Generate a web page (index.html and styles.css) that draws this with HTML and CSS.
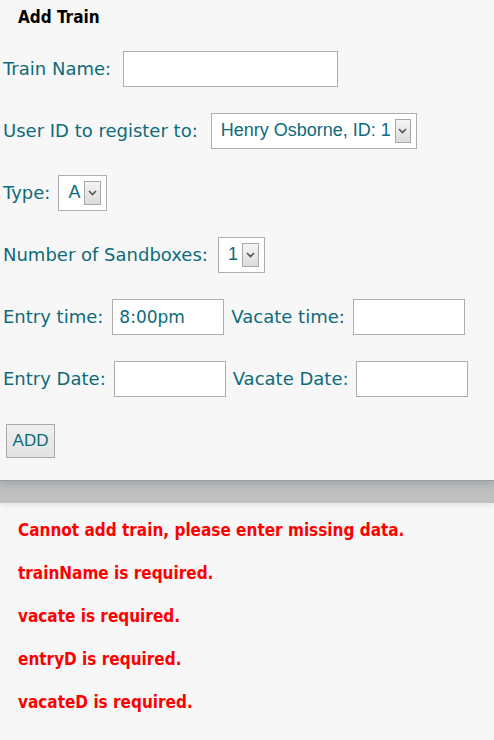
FILE: index.html
```html
<!DOCTYPE html>
<html>
<head>
<meta charset="utf-8">
<title>Add Train</title>
<link rel="stylesheet" href="styles.css">
</head>
<body>
<div class="panel">
  <h2 class="title">Add Train</h2>
  <form class="form">
    <div class="row">
      <label class="lbl lbl-name">Train Name:</label>
      <span class="input w-name"></span>
    </div>
    <div class="row">
      <label class="lbl lbl-user">User ID to register to:</label>
      <span class="select s-user"><span class="val">Henry Osborne, ID: 1</span><span class="arrow"><svg width="9" height="6" viewBox="0 0 9 6"><path d="M1 1 L4.5 4.5 L8 1" fill="none" stroke="#555" stroke-width="1.6"/></svg></span></span>
    </div>
    <div class="row">
      <label class="lbl">Type:</label>
      <span class="select s-type"><span class="val">A</span><span class="arrow"><svg width="9" height="6" viewBox="0 0 9 6"><path d="M1 1 L4.5 4.5 L8 1" fill="none" stroke="#555" stroke-width="1.6"/></svg></span></span>
    </div>
    <div class="row">
      <label class="lbl lbl-num">Number of Sandboxes:</label>
      <span class="select s-num"><span class="val">1</span><span class="arrow"><svg width="9" height="6" viewBox="0 0 9 6"><path d="M1 1 L4.5 4.5 L8 1" fill="none" stroke="#555" stroke-width="1.6"/></svg></span></span>
    </div>
    <div class="row">
      <label class="lbl lbl-entry">Entry time:</label>
      <span class="input w-small"><span class="text">8:00pm</span></span>
      <label class="lbl">Vacate time:</label>
      <span class="input w-small"></span>
    </div>
    <div class="row">
      <label class="lbl">Entry Date:</label>
      <span class="input w-small"></span>
      <label class="lbl lbl-vd">Vacate Date:</label>
      <span class="input w-small"></span>
    </div>
    <div class="row">
      <span class="btn">ADD</span>
    </div>
  </form>
</div>
<div class="band"></div>
<div class="errors">
  <p class="err">Cannot add train, please enter missing data.</p>
  <p class="err">trainName is required.</p>
  <p class="err">vacate is required.</p>
  <p class="err">entryD is required.</p>
  <p class="err">vacateD is required.</p>
</div>
</body>
</html>
```
FILE: styles.css
```css
html, body {
  margin: 0;
  padding: 0;
  background: #f7f7f7;
}
body {
  font-family: "DejaVu Sans", Verdana, sans-serif;
  width: 494px;
  height: 740px;
  overflow: hidden;
}
.panel {
  height: 481px;
  box-sizing: border-box;
  background: #f7f7f7;
  box-shadow: 0 2px 10px rgba(40, 70, 80, 0.28);
  position: relative;
  z-index: 1;
  border-bottom: 1px solid #9a9e9f;
}
.title {
  margin: 0;
  padding: 5px 0 0 18px;
  font-family: "DejaVu Sans Condensed", "DejaVu Sans", sans-serif;
  font-weight: bold;
  font-size: 17px;
  line-height: 24px;
  color: #000;
}
.form {
  display: flex;
  flex-direction: column;
  gap: 27px;
  padding: 22px 0 0 3px;
}
.row {
  display: flex;
  align-items: center;
  height: 35px;
}
.lbl {
  font-size: 18px;
  color: #0e6b7a;
  margin-right: 8px;
  white-space: nowrap;
}
.lbl-name { margin-right: 11px; }
.lbl-user { margin-right: 13px; }
.lbl-num { margin-right: 10px; }
.lbl-entry { margin-right: 9px; }
.lbl-vd { margin-right: 7px; }
.input {
  box-sizing: border-box;
  height: 36px;
  background: #fff;
  border: 1px solid #aeaeb2;
  display: flex;
  align-items: center;
  padding-left: 6px;
  margin-right: 7px;
}
.input .text {
  font-size: 17px;
  color: #0e6b7a;
}
.w-name { width: 215px; margin-left: 1px; }
.w-small { width: 112px; }
.select {
  box-sizing: border-box;
  height: 36px;
  background: #fff;
  border: 1px solid #aeaeb2;
  display: flex;
  align-items: center;
  padding: 0 5px 0 9px;
}
.select .val {
  font-family: "Liberation Sans", Arial, sans-serif;
  font-size: 18px;
  color: #0e6b7a;
  flex: 1;
  white-space: nowrap;
}
.select .arrow {
  box-sizing: border-box;
  width: 17px;
  height: 24px;
  border: 1px solid #a8a8a8;
  background: linear-gradient(#f4f4f4, #dcdcdc);
  display: flex;
  align-items: center;
  justify-content: center;
  margin-left: 4px;
}
.s-user { width: 206px; }
.s-type { width: 49px; }
.s-num { width: 47px; }
.btn {
  box-sizing: border-box;
  margin-left: 3px;
  height: 34px;
  width: 49px;
  border: 1px solid #a9a9a9;
  background: linear-gradient(#f0f0f0, #e2e2e2);
  font-family: "Liberation Sans", Arial, sans-serif;
  font-size: 17px;
  color: #0e6b7a;
  display: flex;
  align-items: center;
  justify-content: center;
}
.band {
  height: 22px;
  background: #c0c0c0;
  box-shadow: 0 2px 6px rgba(40, 70, 80, 0.12);
}
.errors {
  padding: 15px 0 0 18px;
}
.err {
  margin: 0 0 19px 0;
  font-family: "DejaVu Sans Condensed", "DejaVu Sans", sans-serif;
  font-weight: bold;
  font-size: 17px;
  line-height: 24px;
  color: #ff0000;
}
```
